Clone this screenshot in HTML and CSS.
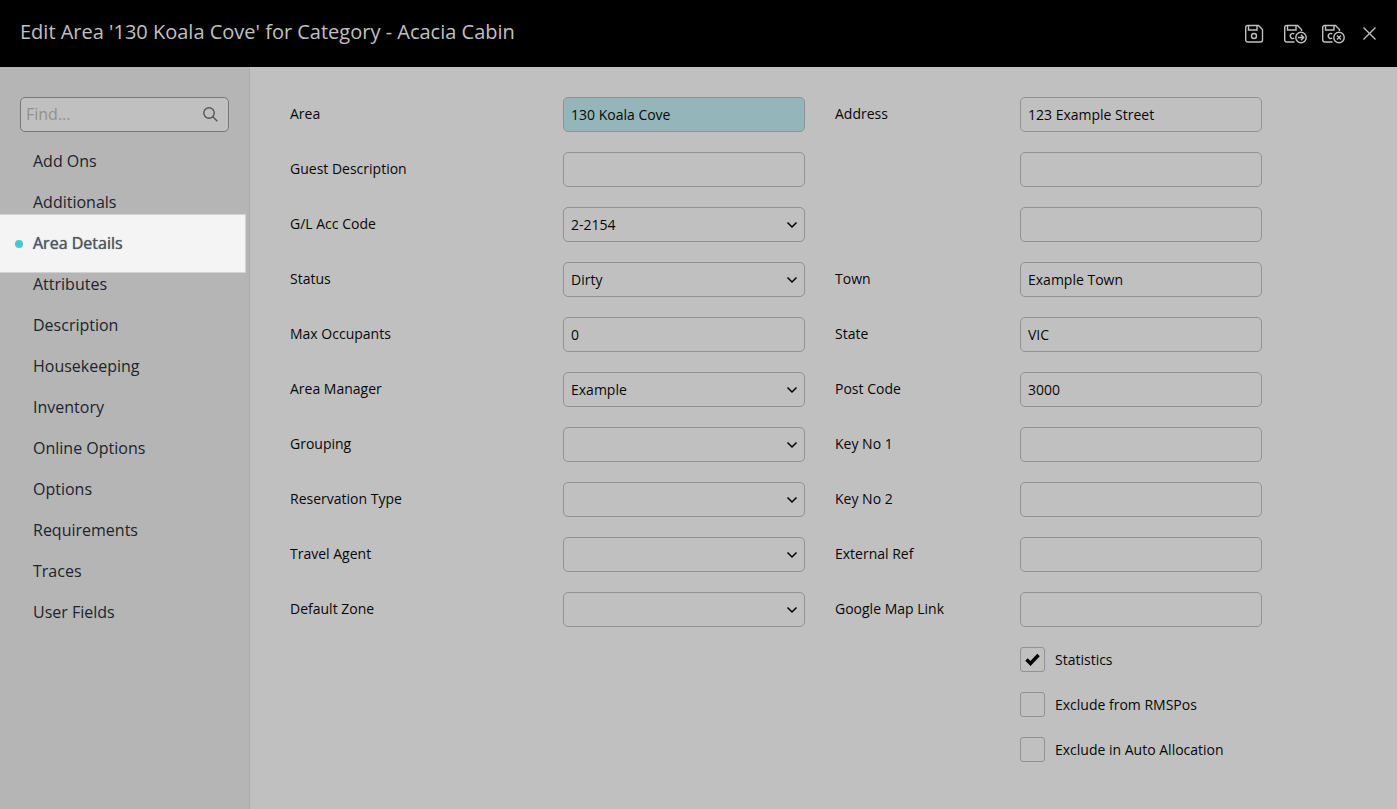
FILE: index.html
```html
<!doctype html>
<html lang="en">
  <head>
    <meta charset="utf-8">
    <meta name="viewport" content="width=device-width, initial-scale=1">
    <title>Edit Area</title>
    <link rel="stylesheet" href="styles.css">
  </head>
  <body>
    <header class="header">
      <h1 class="title">Edit Area '130 Koala Cove' for Category - Acacia Cabin</h1>
      <div class="actions">
        <button type="button" aria-label="Save">
          <svg width="24" height="20" viewBox="0 0 24 20">
            <path d="M2.700 1.500h10.800l4 4v10.500a2 2 0 0 1-2 2h-12.800a2 2 0 0 1-2-2v-12.500a2 2 0 0 1 2-2z"/>
            <path d="M3.500 1.500v4.500h8.500v-4.500"/>
            <circle cx="9" cy="12" r="2.500"/>
          </svg>
        </button>
        <button type="button" aria-label="Save and continue">
          <svg width="23" height="20" viewBox="0 0 23 20">
            <path d="M10.500 18h-7.800a2 2 0 0 1-2-2v-12.500a2 2 0 0 1 2-2h10.800l4 4v1.500"/>
            <path d="M3.500 1.500v4.500h8.500v-4.500"/>
            <path d="M10.300 10a2.500 2.500 0 1 0 0 4"/>
            <circle cx="17" cy="13.500" r="5.200"/>
            <path d="M14 13.500h5.500M17 10.800l2.700 2.700l-2.700 2.700"/>
          </svg>
        </button>
        <button type="button" aria-label="Save and close">
          <svg width="23" height="20" viewBox="0 0 23 20">
            <path d="M10.500 18h-7.800a2 2 0 0 1-2-2v-12.500a2 2 0 0 1 2-2h10.800l4 4v1.500"/>
            <path d="M3.500 1.500v4.500h8.500v-4.500"/>
            <path d="M10.300 10a2.500 2.500 0 1 0 0 4"/>
            <circle cx="17" cy="13.500" r="5.200"/>
            <path d="M15 11.500l4 4M19 11.500l-4 4"/>
          </svg>
        </button>
        <button type="button" aria-label="Close">
          <svg width="17" height="20" viewBox="0 0 17 20">
            <path d="M3.500 3.500l12 12M15.500 3.500l-12 12"/>
          </svg>
        </button>
      </div>
    </header>

    <div class="layout">
      <aside class="sidebar">
        <div class="search">
          <input type="search" placeholder="Find..." aria-label="Find">
          <svg width="15" height="15" viewBox="0 0 15 15">
            <circle cx="6" cy="6" r="5.200"/>
            <path d="M9.800 9.800l4.500 4.500"/>
          </svg>
        </div>
        <nav class="menu">
          <a href="#">Add Ons</a>
          <a href="#">Additionals</a>
          <a href="#" class="active" aria-current="page">Area Details</a>
          <a href="#">Attributes</a>
          <a href="#">Description</a>
          <a href="#">Housekeeping</a>
          <a href="#">Inventory</a>
          <a href="#">Online Options</a>
          <a href="#">Options</a>
          <a href="#">Requirements</a>
          <a href="#">Traces</a>
          <a href="#">User Fields</a>
        </nav>
      </aside>

      <form class="form">
        <div class="column column-area">
          <div class="field">
            <label for="area">Area</label>
            <input id="area" type="text" class="highlight" value="130 Koala Cove">
          </div>
          <div class="field">
            <label for="guest-description">Guest Description</label>
            <input id="guest-description" type="text">
          </div>
          <div class="field">
            <label for="gl-code">G/L Acc Code</label>
            <select id="gl-code"><option>2-2154</option></select>
          </div>
          <div class="field">
            <label for="status">Status</label>
            <select id="status"><option>Dirty</option></select>
          </div>
          <div class="field">
            <label for="max-occupants">Max Occupants</label>
            <input id="max-occupants" type="text" value="0">
          </div>
          <div class="field">
            <label for="manager">Area Manager</label>
            <select id="manager"><option>Example</option></select>
          </div>
          <div class="field">
            <label for="grouping">Grouping</label>
            <select id="grouping"><option></option></select>
          </div>
          <div class="field">
            <label for="reservation-type">Reservation Type</label>
            <select id="reservation-type"><option></option></select>
          </div>
          <div class="field">
            <label for="travel-agent">Travel Agent</label>
            <select id="travel-agent"><option></option></select>
          </div>
          <div class="field">
            <label for="default-zone">Default Zone</label>
            <select id="default-zone"><option></option></select>
          </div>
        </div>

        <div class="column column-address">
          <div class="field">
            <label for="address-1">Address</label>
            <input id="address-1" type="text" value="123 Example Street">
          </div>
          <div class="field">
            <input id="address-2" type="text" aria-label="Address line 2">
          </div>
          <div class="field">
            <input id="address-3" type="text" aria-label="Address line 3">
          </div>
          <div class="field">
            <label for="town">Town</label>
            <input id="town" type="text" value="Example Town">
          </div>
          <div class="field">
            <label for="state">State</label>
            <input id="state" type="text" value="VIC">
          </div>
          <div class="field">
            <label for="post-code">Post Code</label>
            <input id="post-code" type="text" value="3000">
          </div>
          <div class="field">
            <label for="key-1">Key No 1</label>
            <input id="key-1" type="text">
          </div>
          <div class="field">
            <label for="key-2">Key No 2</label>
            <input id="key-2" type="text">
          </div>
          <div class="field">
            <label for="external-ref">External Ref</label>
            <input id="external-ref" type="text">
          </div>
          <div class="field">
            <label for="map-link">Google Map Link</label>
            <input id="map-link" type="text">
          </div>
          <div class="field">
            <div class="check">
              <input id="statistics" type="checkbox" checked>
              <label for="statistics">Statistics</label>
            </div>
          </div>
          <div class="field">
            <div class="check">
              <input id="exclude-pos" type="checkbox">
              <label for="exclude-pos">Exclude from RMSPos</label>
            </div>
          </div>
          <div class="field">
            <div class="check">
              <input id="exclude-auto" type="checkbox">
              <label for="exclude-auto">Exclude in Auto Allocation</label>
            </div>
          </div>
        </div>
      </form>
    </div>
  </body>
</html>
```

FILE: styles.css
```css
* {
  box-sizing: border-box;
}

body {
  margin: 0;
  min-height: 100vh;
  display: flex;
  flex-direction: column;
  color: #080808;
  background-color: #c0c0c0;
  font-family: "Open Sans", "Noto Sans", sans-serif;
  font-size: 14px;
}

svg {
  display: block;
  fill: none;
  stroke: currentColor;
  stroke-width: 1.4;
}

/* Header */

.header {
  display: flex;
  justify-content: space-between;
  align-items: center;
  min-height: 67px;
  padding: 0 20px;
  background-color: #000;
  color: #c0c0c0;
}

.title {
  margin: 0;
  padding-bottom: 4px;
  font-size: 20px;
  font-weight: 400;
  line-height: 28px;
}

.actions {
  display: flex;
  gap: 15px;
}

.actions button {
  padding: 0;
  border: 0;
  background: none;
  color: inherit;
  cursor: pointer;
}

/* Sidebar */

.layout {
  flex: 1;
  display: flex;
}

.sidebar {
  flex: none;
  width: 250px;
  padding-top: 30px;
  background-color: #b5b5b5;
  border-right: 1px solid #adadad;
}

.search {
  display: flex;
  align-items: center;
  height: 35px;
  margin: 0 20px 9px;
  padding: 0 10px 0 5px;
  border: 1px solid #777;
  border-radius: 5px;
  background-color: #c0c0c0;
  color: #555;
}

.search input {
  flex: 1;
  min-width: 0;
  padding: 0 0 2px;
  border: 0;
  outline: 0;
  background: none;
  font-family: inherit;
  font-size: 16px;
}

.search input::placeholder {
  color: #919191;
}

.menu {
  display: flex;
  flex-direction: column;
}

.menu a {
  padding-left: 33px;
  color: #20242c;
  font-size: 16px;
  line-height: 41px;
  text-decoration: none;
}

/* the selected entry is taller than its row and covers its neighbours' edges */
.menu .active {
  display: flex;
  align-items: center;
  gap: 10px;
  height: 59px;
  margin: -9px 3px -9px 0;
  padding-left: 15px;
  border: 1px solid #d2d2d2;
  border-left: 0;
  background-color: #f4f4f4;
  color: #505662;
  text-shadow: 0 0 1px #505662;
}

.menu .active::before {
  content: "";
  width: 8px;
  height: 8px;
  border-radius: 50%;
  background-color: #45c8d2;
}

/* Form */

.form {
  flex: 1;
  display: grid;
  grid-template-columns: 515fr 427fr;
  column-gap: 30px;
  align-items: start;
  padding: 30px 135px 30px 40px;
}

.column {
  display: grid;
  row-gap: 20px;
}

.field {
  display: grid;
  align-items: center;
}

.column-area .field {
  grid-template-columns: 273fr 242fr;
}

.column-address .field {
  grid-template-columns: 185fr 242fr;
}

.field > label {
  padding-bottom: 2px;
}

.field > input,
.field > select,
.check {
  grid-column: 2;
}

.field > input,
.field > select {
  width: 100%;
  height: 35px;
  padding: 0 7px;
  border: 1px solid #929292;
  border-radius: 5px;
  background-color: #c0c0c0;
  color: inherit;
  font-family: inherit;
  font-size: 14px;
}

.field > .highlight {
  background-color: #94b6ba;
}

.field > select {
  appearance: none;
  background-image: url("data:image/svg+xml,%3Csvg xmlns='http://www.w3.org/2000/svg' width='12' height='8' viewBox='0 0 12 8'%3E%3Cpath d='M1.500 1.500L6 6l4.500-4.500' fill='none' stroke='%23000' stroke-width='1.500'/%3E%3C/svg%3E");
  background-repeat: no-repeat;
  background-position: right 6px center;
}

.check {
  display: flex;
  align-items: center;
  gap: 10px;
}

.check input {
  appearance: none;
  flex: none;
  width: 25px;
  height: 25px;
  margin: 0;
  border: 1px solid #929292;
  border-radius: 3px;
}

.check input:checked {
  background: url("data:image/svg+xml,%3Csvg xmlns='http://www.w3.org/2000/svg' width='15' height='13' viewBox='0 0 15 13'%3E%3Cpath d='M1.500 6.500L5.500 10.500L13.500 2' fill='none' stroke='%23000' stroke-width='3.400'/%3E%3C/svg%3E") center no-repeat;
}

.check label {
  white-space: nowrap;
}

@media (max-width: 1000px) {
  .form {
    grid-template-columns: 1fr;
    row-gap: 20px;
    padding-right: 40px;
  }
}
```
